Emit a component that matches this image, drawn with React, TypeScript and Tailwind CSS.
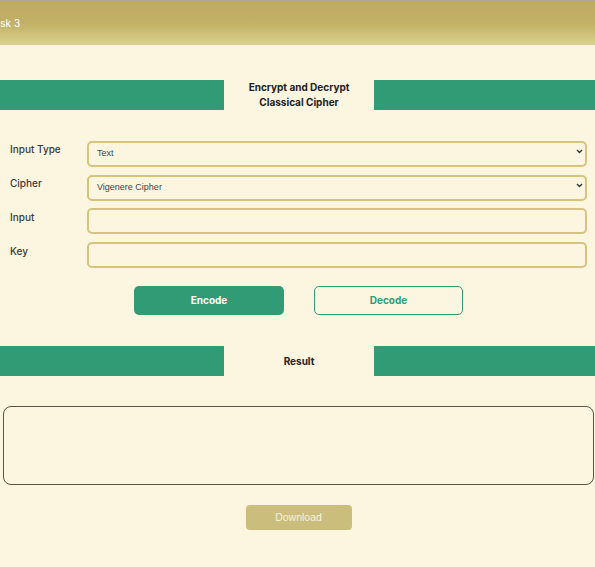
import React from "react";

function Bar({ children }: { children: React.ReactNode }) {
  return (
    <div className="flex items-stretch h-[30px]">
      <div className="w-[224px] bg-[#319b76]" />
      <div className="w-[150px] flex flex-col items-center justify-center text-[10px] font-bold leading-[15px] text-[#222] text-center">
        {children}
      </div>
      <div className="flex-1 bg-[#319b76]" />
    </div>
  );
}

function Row({ label, children }: { label: string; children: React.ReactNode }) {
  return (
    <div className="flex items-center h-[26px]">
      <div className="w-[87px] pl-[10px] text-[10px] font-medium text-[#3a3a3a] pb-[3px]">{label}</div>
      <div className="w-[500px] h-full relative">{children}</div>
    </div>
  );
}

function Chevron() {
  return (
    <svg
      className="absolute right-[4px] top-[11px] pointer-events-none"
      width="7"
      height="5"
      viewBox="0 0 7 5"
      fill="none"
    >
      <path d="M1 1l2.5 2.5L6 1" stroke="#333" strokeWidth="1.4" />
    </svg>
  );
}

export default function App() {
  return (
    <div
      className="w-[595px] h-[567px] overflow-hidden bg-[#fcf5e0] flex flex-col"
      style={{ fontFamily: "Inter, 'Noto Sans', sans-serif" }}
    >
      <header className="h-[45px] shrink-0 border-t border-[#b3aa8a] bg-gradient-to-b from-[#bfaa62] via-[#c2b066] to-[#d9d28f] flex items-center overflow-hidden">
        <span className="ml-[-11px] text-[10px] text-white">Task 3</span>
      </header>

      <div className="mt-[35px]">
        <Bar>
          <span>Encrypt and Decrypt</span>
          <span>Classical Cipher</span>
        </Bar>
      </div>

      <div className="mt-[28px] flex flex-col gap-[8px]">
        <Row label="Input Type">
          <select
            className="appearance-none w-full h-full rounded-[5px] border-2 border-[#d6c47e] pl-[8px] pr-[14px] text-[9px] text-[#444] outline-none"
            style={{ fontFamily: "'Liberation Sans', Arial, sans-serif" }}
            defaultValue="Text"
          >
            <option>Text</option>
            <option>File</option>
          </select>
          <Chevron />
        </Row>
        <Row label="Cipher">
          <select
            className="appearance-none w-full h-full rounded-[5px] border-2 border-[#d6c47e] pl-[8px] pr-[14px] text-[9px] text-[#444] outline-none"
            style={{ fontFamily: "'Liberation Sans', Arial, sans-serif" }}
            defaultValue="Vigenere Cipher"
          >
            <option>Vigenere Cipher</option>
            <option>Caesar Cipher</option>
          </select>
          <Chevron />
        </Row>
        <Row label="Input">
          <input className="w-full h-full rounded-[5px] border-2 border-[#d6c47e] px-[8px] text-[9px] outline-none" />
        </Row>
        <Row label="Key">
          <input className="w-full h-full rounded-[5px] border-2 border-[#d6c47e] px-[8px] text-[9px] outline-none" />
        </Row>
      </div>

      <div className="mt-[20px] flex pl-[134px] gap-[30px]">
        <button className="w-[150px] h-[29px] rounded-[5px] bg-[#319b76] text-white text-[10px] font-bold">
          Encode
        </button>
        <button className="w-[149px] h-[29px] rounded-[5px] border-[1.5px] border-[#319b76] text-[#319b76] text-[10px] font-bold">
          Decode
        </button>
      </div>

      <div className="mt-[31px]">
        <Bar>
          <span>Result</span>
        </Bar>
      </div>

      <div className="mt-[30px] pl-[3px] pr-[1px]">
        <div className="h-[79px] rounded-[8px] border-[1.5px] border-[#5c5444]" />
      </div>

      <div className="mt-[20px] flex justify-center pl-[2px]">
        <button
          className="w-[106px] h-[25px] rounded-[4px] bg-[#cbbd7c] text-[#f7f1da] text-[10.5px]"
          style={{ fontFamily: "'Liberation Sans', Arial, sans-serif" }}
        >
          Download
        </button>
      </div>
    </div>
  );
}
